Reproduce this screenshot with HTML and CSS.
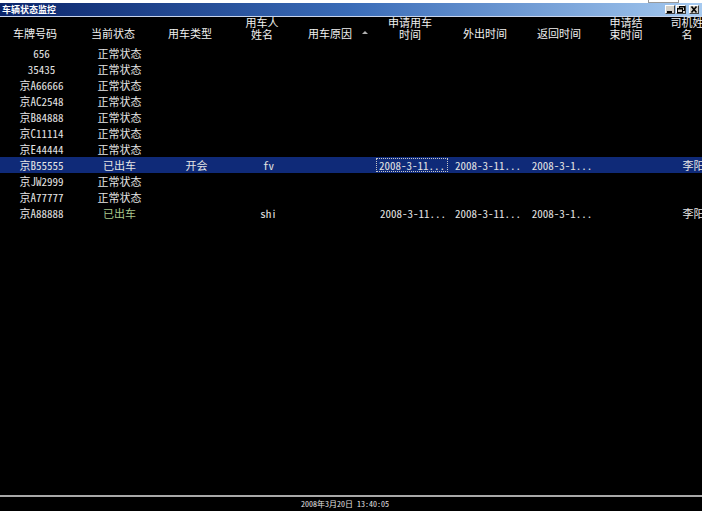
FILE: index.html
```html
<!DOCTYPE html>
<html lang="zh-CN">
<head>
<meta charset="utf-8">
<title>车辆状态监控</title>
<link rel="stylesheet" href="styles.css">
</head>
<body>
<div class="topstrip"><div class="topbox"></div></div>
<div class="titlebar">
  <span class="title">车辆状态监控</span>
  <div class="btns">
    <span class="btn"><svg width="10" height="9" viewBox="0 0 10 9"><rect x="2" y="6" width="5" height="2" fill="#000"/></svg></span>
    <span class="btn"><svg width="10" height="9" viewBox="0 0 10 9"><rect x="3.5" y="1.5" width="5" height="4" fill="none" stroke="#000"/><rect x="3" y="1" width="6" height="1.5" fill="#000"/><rect x="1.5" y="3.5" width="5" height="4" fill="#d4d0c8" stroke="#000"/><rect x="1" y="3" width="6" height="1.5" fill="#000"/></svg></span>
    <span class="btn close"><svg width="10" height="9" viewBox="0 0 10 9"><path d="M2.5 1.5 L7.5 7.5 M7.5 1.5 L2.5 7.5" stroke="#000" stroke-width="1.6"/></svg></span>
  </div>
</div>
<div class="client">
  <div class="header grid">
    <div class="h">车牌号码</div>
    <div class="h">当前状态</div>
    <div class="h">用车类型</div>
    <div class="h two">用车人<br>姓名</div>
    <div class="h sort">用车原因<span class="arrow"></span></div>
    <div class="h two">申请用车<br>时间</div>
    <div class="h">外出时间</div>
    <div class="h">返回时间</div>
    <div class="h two">申请结<br>束时间</div>
    <div class="h two">司机姓<br>名</div>
  </div>
  <div class="list">
    <div class="row grid"><div class="c">656</div><div class="c">正常状态</div><div></div><div></div><div></div><div></div><div></div><div></div><div></div><div></div></div>
    <div class="row grid"><div class="c">35435</div><div class="c">正常状态</div><div></div><div></div><div></div><div></div><div></div><div></div><div></div><div></div></div>
    <div class="row grid"><div class="c">京A66666</div><div class="c">正常状态</div><div></div><div></div><div></div><div></div><div></div><div></div><div></div><div></div></div>
    <div class="row grid"><div class="c">京AC2548</div><div class="c">正常状态</div><div></div><div></div><div></div><div></div><div></div><div></div><div></div><div></div></div>
    <div class="row grid"><div class="c">京B84888</div><div class="c">正常状态</div><div></div><div></div><div></div><div></div><div></div><div></div><div></div><div></div></div>
    <div class="row grid"><div class="c">京C11114</div><div class="c">正常状态</div><div></div><div></div><div></div><div></div><div></div><div></div><div></div><div></div></div>
    <div class="row grid"><div class="c">京E44444</div><div class="c">正常状态</div><div></div><div></div><div></div><div></div><div></div><div></div><div></div><div></div></div>
    <div class="row grid selected"><div class="c">京B55555</div><div class="c">已出车</div><div class="c">开会</div><div class="c">fv</div><div></div><div class="d focus">2008-3-11...</div><div class="d">2008-3-11...</div><div class="d">2008-3-1...</div><div></div><div class="c">李阳</div></div>
    <div class="row grid"><div class="c">京JW2999</div><div class="c">正常状态</div><div></div><div></div><div></div><div></div><div></div><div></div><div></div><div></div></div>
    <div class="row grid"><div class="c">京A77777</div><div class="c">正常状态</div><div></div><div></div><div></div><div></div><div></div><div></div><div></div><div></div></div>
    <div class="row grid"><div class="c">京A88888</div><div class="c green">已出车</div><div></div><div class="c">shi</div><div></div><div class="d">2008-3-11...</div><div class="d">2008-3-11...</div><div class="d">2008-3-1...</div><div></div><div class="c">李阳</div></div>
  </div>
  <div class="status">2008年3月20日 13:40:05</div>
</div>
</body>
</html>
```

FILE: styles.css
```css
html, body {
  margin: 0;
  padding: 0;
  background: #ffffff;
  width: 702px;
  height: 520px;
  overflow: hidden;
}

body {
  font-family: "Noto Sans Mono CJK SC", "Liberation Mono", "Noto Sans CJK SC", monospace;
  font-size: 11px;
  color: #e4e4e4;
}

.topstrip {
  height: 3px;
  background: #ffffff;
  position: relative;
}

.topbox {
  position: absolute;
  left: 648px;
  top: -6px;
  width: 29px;
  height: 7px;
  border: 1px solid #9a9a9a;
  background: #ffffff;
}

.titlebar {
  height: 13px;
  background: linear-gradient(to right, #0a246a 0%, #3a6cb8 50%, #a6caf0 100%);
  display: flex;
  align-items: center;
  justify-content: space-between;
  border-bottom: 1px solid #c8d4ec;
}

.title {
  font-family: "Noto Sans CJK SC", sans-serif;
  font-size: 9px;
  font-weight: bold;
  color: #ffffff;
  padding-left: 2px;
  line-height: 12px;
}

.btns {
  display: flex;
  gap: 1px;
  padding-right: 3px;
}

.btn {
  width: 10px;
  height: 9px;
  background: #d4d0c8;
  border-top: 1px solid #ffffff;
  border-left: 1px solid #ffffff;
  border-right: 1px solid #404040;
  border-bottom: 1px solid #404040;
  box-sizing: border-box;
  display: flex;
  align-items: center;
  justify-content: center;
  overflow: hidden;
}

.btn svg { display: block; flex: none; }

.btn.close { margin-left: 2px; }

.client {
  background: #000000;
  height: 494px;
  display: flex;
  flex-direction: column;
}

.grid {
  display: grid;
  grid-template-columns: 76px 80px 74px 70px 76px 74px 76px 72px 62px 60px;
  width: 720px;
}

.header {
  height: 28px;
  flex: none;
  color: #f0f0f0;
}

.h {
  text-align: center;
  padding-right: 6px;
  padding-top: 10px;
  line-height: 12px;
  white-space: nowrap;
}

.h.two {
  padding-top: 0;
  margin-top: -1px;
  line-height: 12px;
}

.h.sort {
  padding-right: 0;
  display: flex;
  justify-content: center;
  align-items: flex-start;
}

.arrow {
  width: 0;
  height: 0;
  border-left: 3px solid transparent;
  border-right: 3px solid transparent;
  border-bottom: 3px solid #b0b0b0;
  margin-left: 10px;
  margin-top: 4px;
}

.list {
  flex: 1;
  overflow: hidden;
}

.row {
  height: 16px;
  line-height: 16px;
}

.c {
  text-align: center;
  padding-left: 7px;
  white-space: nowrap;
}

.d {
  text-align: center;
  white-space: nowrap;
}

.selected {
  background: #0f2a78;
}

.focus {
  outline: 1px dotted #c8c8c8;
  outline-offset: -1px;
  margin: 1px 2px 1px 0;
  line-height: 14px;
}

.green {
  color: #a8c88c;
}

.status {
  flex: none;
  height: 14px;
  border-top: 2px solid #a8a8a8;
  font-size: 8px;
  line-height: 14px;
  text-align: center;
  padding-right: 12px;
  color: #e0e0e0;
}
```
